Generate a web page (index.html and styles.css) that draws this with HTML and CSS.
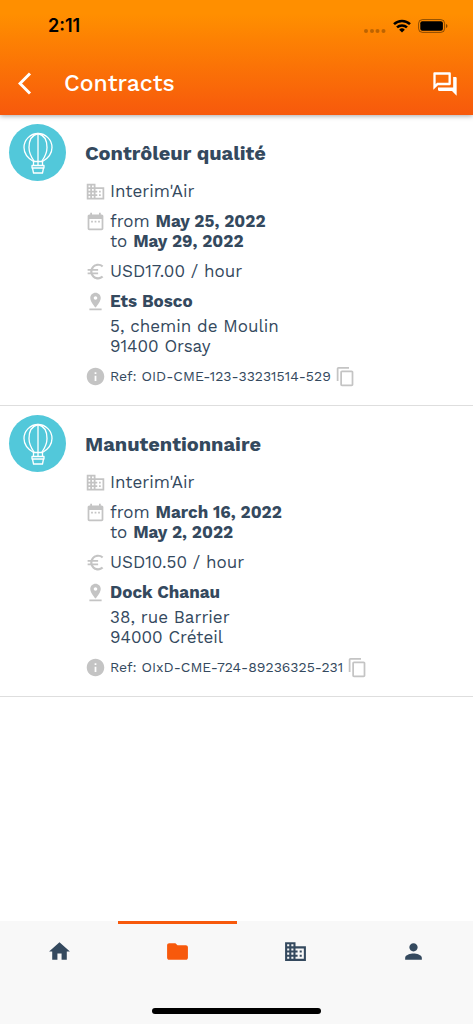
FILE: index.html
```html
<!DOCTYPE html>
<html lang="en">
<head>
<meta charset="utf-8">
<meta name="viewport" content="width=device-width, initial-scale=1">
<title>Contracts</title>
<link rel="stylesheet" href="styles.css">
</head>
<body>
<svg class="sprite" aria-hidden="true">
  <symbol id="business" viewBox="0 0 24 24"><path d="M12 7V3H2v18h20V7H12zM6 19H4v-2h2v2zm0-4H4v-2h2v2zm0-4H4V9h2v2zm0-4H4V5h2v2zm4 12H8v-2h2v2zm0-4H8v-2h2v2zm0-4H8V9h2v2zm0-4H8V5h2v2zm10 12h-8v-2h2v-2h-2v-2h2v-2h-2V9h8v10zm-2-8h-2v2h2v-2zm0 4h-2v2h2v-2z"/></symbol>
  <symbol id="calendar" viewBox="0 0 24 24"><path d="M9 11H7v2h2v-2zm4 0h-2v2h2v-2zm4 0h-2v2h2v-2zm2-7h-1V2h-2v2H8V2H6v2H5c-1.110 0-2 .9-2 2v14c0 1.100.89 2 2 2h14c1.100 0 2-.9 2-2V6c0-1.100-.9-2-2-2zm0 16H5V9h14v11z"/></symbol>
  <symbol id="euro" viewBox="0 0 24 24"><path d="M15 18.500c-2.510 0-4.680-1.420-5.760-3.500H15v-2H8.580c-.05-.33-.08-.66-.08-1s.03-.67.08-1H15V9H9.240C10.320 6.920 12.500 5.500 15 5.500c1.610 0 3.090.59 4.230 1.570L21 5.300C19.410 3.870 17.300 3 15 3c-3.920 0-7.240 2.510-8.480 6H3v2h3.060c-.04.33-.06.66-.06 1s.02.67.06 1H3v2h3.520c1.240 3.490 4.560 6 8.480 6 2.310 0 4.410-.87 6-2.300l-1.780-1.770c-1.130.98-2.600 1.570-4.220 1.570z"/></symbol>
  <symbol id="pin" viewBox="0 0 24 24"><path d="M18 8c0-3.310-2.690-6-6-6S6 4.690 6 8c0 4.500 6 11 6 11s6-6.500 6-11zm-8 0c0-1.100.9-2 2-2s2 .9 2 2-.89 2-2 2c-1.100 0-2-.9-2-2zM5 20v2h14v-2H5z"/></symbol>
  <symbol id="info" viewBox="0 0 24 24"><path d="M12 2C6.480 2 2 6.480 2 12s4.480 10 10 10 10-4.480 10-10S17.520 2 12 2zm1 15h-2v-6h2v6zm0-8h-2V7h2v2z"/></symbol>
  <symbol id="copy" viewBox="0 0 24 24"><path d="M16 1H4c-1.100 0-2 .9-2 2v14h2V3h12V1zm3 4H8c-1.100 0-2 .9-2 2v14c0 1.100.9 2 2 2h11c1.100 0 2-.9 2-2V7c0-1.100-.9-2-2-2zm0 16H8V7h11v14z"/></symbol>
  <symbol id="balloon" viewBox="0 0 57 57"><g fill="none" stroke="#fff" stroke-width="1.300" stroke-linecap="round" stroke-linejoin="round"><path d="M24.500 37.500C18.500 34 15 29 15 23.500a14 14 0 0 1 28 0C43 29 39.500 34 33.500 37.500Z"/><path d="M25 37C21.500 32 20 28 20 23.500 20 16 23 11 29 9.500 35 11 38 16 38 23.500 38 28 36.500 32 33 37M29 9.500V41M24.500 37.500v3.500M33.500 37.500v3.500"/><path d="M23 41.500h12V44H23zM23.500 44l1 5h9l1-5"/></g></symbol>
</svg>

<div class="app">
  <header class="header">
    <div class="status">
      <span class="time">2:11</span>
      <div class="signals">
        <svg class="dots" viewBox="0 0 22 4" aria-hidden="true"><circle cx="2" cy="2" r="2"/><circle cx="8" cy="2" r="2"/><circle cx="13.500" cy="2" r="2"/><circle cx="19.500" cy="2" r="2"/></svg>
        <svg class="wifi" viewBox="0 0 18 14" aria-hidden="true"><g fill="none" stroke="#000" stroke-width="2.500"><path d="M1 5.200a11.500 11.500 0 0 1 16 0"/><path d="M4 8.400a7.200 7.200 0 0 1 10 0"/></g><path d="M9 13.500 6.200 10.700a4 4 0 0 1 5.600 0Z"/></svg>
        <svg class="battery" viewBox="0 0 30 14" aria-hidden="true"><rect x=".6" y=".6" width="26" height="12.800" rx="3.800" fill="none" stroke="#000" stroke-opacity=".45"/><rect x="2.300" y="2.300" width="22.600" height="9.400" rx="2"/><path d="M28 5v4q1.500-.5 1.500-2T28 5Z" fill-opacity=".5"/></svg>
      </div>
    </div>
    <div class="bar">
      <button class="icon-button" aria-label="Back"><svg class="back" viewBox="0 0 14 23"><path d="m12 1.500-10 10 10 10" fill="none" stroke="currentColor" stroke-width="3"/></svg></button>
      <h1 class="heading">Contracts</h1>
      <button class="icon-button" aria-label="Messages"><svg class="chat" viewBox="0 0 24 24"><path d="M15 4v7H5.170L4 12.170V4h11m1-2H3c-.55 0-1 .45-1 1v14l4-4h10c.55 0 1-.45 1-1V3c0-.55-.45-1-1-1zm5 4h-2v9H6v2c0 .55.45 1 1 1h11l4 4V7c0-.55-.45-1-1-1z"/></svg></button>
    </div>
  </header>

  <main class="list">
    <article class="card">
      <svg class="avatar" aria-hidden="true"><use href="#balloon"/></svg>
      <div class="details">
        <h2 class="title">Contrôleur qualité</h2>
        <div class="row"><svg class="icon"><use href="#business"/></svg><p>Interim'Air</p></div>
        <div class="row"><svg class="icon"><use href="#calendar"/></svg><p>from <b>May 25, 2022</b><br>to <b>May 29, 2022</b></p></div>
        <div class="row"><svg class="icon"><use href="#euro"/></svg><p>USD17.00 / hour</p></div>
        <div class="row"><svg class="icon"><use href="#pin"/></svg><div><p><b>Ets Bosco</b></p><p class="address">5, chemin de Moulin<br>91400 Orsay</p></div></div>
        <div class="row"><svg class="icon"><use href="#info"/></svg><p class="ref">Ref: OID-CME-123-33231514-529</p><button class="copy" aria-label="Copy reference"><svg class="icon"><use href="#copy"/></svg></button></div>
      </div>
    </article>
    <article class="card">
      <svg class="avatar" aria-hidden="true"><use href="#balloon"/></svg>
      <div class="details">
        <h2 class="title">Manutentionnaire</h2>
        <div class="row"><svg class="icon"><use href="#business"/></svg><p>Interim'Air</p></div>
        <div class="row"><svg class="icon"><use href="#calendar"/></svg><p>from <b>March 16, 2022</b><br>to <b>May 2, 2022</b></p></div>
        <div class="row"><svg class="icon"><use href="#euro"/></svg><p>USD10.50 / hour</p></div>
        <div class="row"><svg class="icon"><use href="#pin"/></svg><div><p><b>Dock Chanau</b></p><p class="address">38, rue Barrier<br>94000 Créteil</p></div></div>
        <div class="row"><svg class="icon"><use href="#info"/></svg><p class="ref">Ref: OIxD-CME-724-89236325-231</p><button class="copy" aria-label="Copy reference"><svg class="icon"><use href="#copy"/></svg></button></div>
      </div>
    </article>
  </main>

  <footer class="footer">
    <nav class="tabs">
      <a class="tab" href="#" aria-label="Home"><svg class="tab-icon" viewBox="0 0 24 24"><path d="M10 20v-6h4v6h5v-8h3L12 3 2 12h3v8z"/></svg></a>
      <a class="tab active" href="#" aria-label="Contracts" aria-current="page"><svg class="tab-icon" viewBox="0 0 24 24"><path d="M10 4H4c-1.100 0-1.990.9-1.990 2L2 18c0 1.100.9 2 2 2h16c1.100 0 2-.9 2-2V8c0-1.100-.9-2-2-2h-8l-2-2z"/></svg></a>
      <a class="tab" href="#" aria-label="Agencies"><svg class="tab-icon"><use href="#business"/></svg></a>
      <a class="tab" href="#" aria-label="Profile"><svg class="tab-icon" viewBox="0 0 24 24"><path d="M12 12c2.210 0 4-1.790 4-4s-1.790-4-4-4-4 1.790-4 4 1.790 4 4 4zm0 2c-2.670 0-8 1.340-8 4v2h16v-2c0-2.660-5.330-4-8-4z"/></svg></a>
    </nav>
    <div class="home-indicator"></div>
  </footer>
</div>
</body>
</html>
```
FILE: styles.css
```css
* { box-sizing: border-box; }
body, h1, h2, p { margin: 0; }
body {
  font-family: "Work Sans", Inter, sans-serif;
  font-size: 17px;
  font-weight: 400;
  line-height: 20px;
  color: #34495e;
  background: #fff;
}
b { font-weight: 700; }
svg { display: block; flex: none; fill: currentColor; }
button { padding: 0; border: 0; background: none; color: inherit; }
.sprite { position: absolute; width: 0; height: 0; }

.app { display: flex; flex-direction: column; min-height: 100vh; }

.header {
  background: linear-gradient(#ff8f00 12%, #f7590c);
  color: #fff;
  box-shadow: 0 1px 5px rgba(0, 0, 0, .35);
}
.status {
  display: flex;
  justify-content: space-between;
  align-items: center;
  height: 52px;
  padding: 0 25px 0 48px;
  color: #000;
}
.time { font-family: Inter, sans-serif; font-size: 18px; font-weight: 600; }
.signals { display: flex; align-items: center; gap: 7px; }
.dots { width: 22px; height: 4px; margin-top: 9px; opacity: .25; }
.wifi { width: 18px; height: 14px; }
.battery { width: 30px; height: 14px; }
.bar { display: flex; align-items: center; height: 63px; padding: 0 14px 0 18px; }
.icon-button { display: flex; }
.back { width: 14px; height: 23px; }
.chat { width: 28px; height: 28px; }
.heading { flex: 1; padding-left: 32px; font-size: 23px; line-height: 28px; font-weight: 500; }

.list { flex: 1; }
.card {
  display: flex;
  gap: 19px;
  padding: 9px 9px 19px;
  border-bottom: 1px solid #dedede;
}
.avatar { width: 57px; height: 57px; border-radius: 50%; background: #52c8da; }
.details { display: flex; flex-direction: column; gap: 10px; flex: 1; padding-top: 15px; }
.title { font-size: 20px; line-height: 28px; font-weight: 700; margin-bottom: 4px; }
.row { display: flex; align-items: flex-start; gap: 4px; }
.icon { width: 21px; height: 21px; margin-bottom: -1px; color: #c4c4c4; }
.address { margin-top: 5px; }
.ref { font-size: 14px; }

.footer { background: #f8f8f8; }
.tabs { display: flex; }
.tab {
  flex: 1;
  display: flex;
  justify-content: center;
  padding: 15px 0 17px;
  border-top: 3px solid transparent;
  color: #34495e;
}
.tab.active { border-color: #f7590c; color: #f7590c; }
.tab-icon { width: 25px; height: 25px; }
.home-indicator { width: 169px; height: 6px; margin: 27px auto 10px; border-radius: 3px; background: #000; }
```
